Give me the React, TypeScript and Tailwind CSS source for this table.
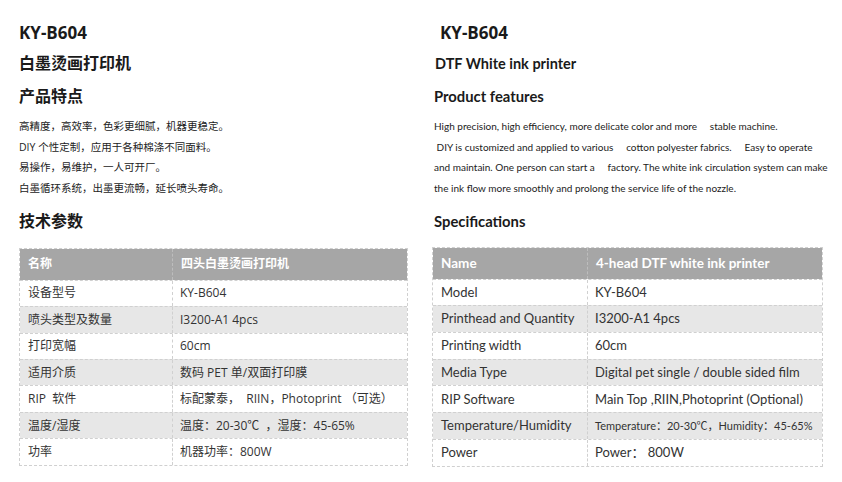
const cn = "font-['Open_Sans','Noto_Sans_CJK_SC',sans-serif]";
const en = "font-['Lato','Noto_Sans_CJK_SC',sans-serif]";

const cnRows: [string, string][] = [
  ['设备型号', 'KY-B604'],
  ['喷头类型及数量', 'I3200-A1 4pcs'],
  ['打印宽幅', '60cm'],
  ['适用介质', '数码 PET 单/双面打印膜'],
  ['RIP  软件', '标配蒙泰，  RIIN，Photoprint （可选）'],
  ['温度/湿度', '温度：20-30℃  ，湿度：45-65%'],
  ['功率', '机器功率：800W'],
];

const enRows: [string, string, boolean?][] = [
  ['Model', 'KY-B604'],
  ['Printhead and Quantity', 'I3200-A1 4pcs'],
  ['Printing width', '60cm'],
  ['Media Type', 'Digital pet single / double sided film'],
  ['RIP Software', 'Main Top ,RIIN,Photoprint (Optional)'],
  ['Temperature/Humidity', 'Temperature：20-30℃，Humidity：45-65%', true],
  ['Power', 'Power： 800W'],
];

function SpecTable({
  head,
  rows,
  firstCol,
  textSize,
  headSize,
  rowH,
  font,
}: {
  head: [string, string];
  rows: [string, string, boolean?][];
  firstCol: string;
  textSize: string;
  headSize: string;
  rowH: string;
  font: string;
}) {
  return (
    <div className={`border border-dashed border-[#d0d0d0] ${font}`}>
      <div className={`flex h-[31px] bg-[#a6a6a6] text-white font-bold ${headSize}`}>
        <div className={`${firstCol} flex items-center pl-2 border-r border-dashed border-[#bdbdbd]`}>{head[0]}</div>
        <div className="flex-1 flex items-center pl-2">{head[1]}</div>
      </div>
      {rows.map(([k, v, small], i) => (
        <div
          key={k}
          className={`flex ${rowH} text-[#333] border-t border-dashed border-[#d0d0d0] ${textSize} ${i % 2 === 1 ? 'bg-[#e7e7e7]' : 'bg-white'}`}
        >
          <div className={`${firstCol} flex items-center pl-2 border-r border-dashed border-[#d0d0d0] whitespace-pre`}>{k}</div>
          <div className={`flex-1 flex items-center pl-[7px] whitespace-pre ${small ? 'text-[11px]' : ''}`}>{v}</div>
        </div>
      ))}
    </div>
  );
}

export default function App() {
  return (
    <div className="w-[842px] h-[482px] bg-white flex text-[#1a1a1a]">
      {/* Chinese column */}
      <div className={`w-[413px] pl-[19px] pt-[23px] ${cn}`}>
        <div className="h-[20px] leading-[20px] text-[17px] font-bold">KY-B604</div>
        <div className="mt-[10px] h-[20px] leading-[20px] text-[16px] font-bold">白墨烫画打印机</div>
        <div className="mt-[13px] h-[20px] leading-[20px] text-[16px] font-bold">产品特点</div>
        <div className="mt-[10px] text-[10.5px] leading-[20.67px] text-[#222]">
          <div>高精度，高效率，色彩更细腻，机器更稳定。</div>
          <div>DIY 个性定制，应用于各种棉涤不同面料。</div>
          <div>易操作，易维护，一人可开厂。</div>
          <div>白墨循环系统，出墨更流畅，延长喷头寿命。</div>
        </div>
        <div className="mt-[12px] h-[20px] leading-[20px] text-[16px] font-bold">技术参数</div>
        <div className="mt-[17px] w-[389px]">
          <SpecTable
            head={['名称', '四头白墨烫画打印机']}
            rows={cnRows}
            firstCol="w-[153px]"
            textSize="text-[12px]"
            headSize="text-[12px]"
            rowH="h-[26.43px]"
            font={cn}
          />
        </div>
      </div>

      {/* English column */}
      <div className={`w-[429px] pl-[2px] pt-[23px] ${en}`}>
        <div className={`h-[20px] leading-[20px] text-[17px] font-bold pl-[25px] ${cn}`}>KY-B604</div>
        <div className="mt-[11px] h-[20px] leading-[20px] text-[14.5px] font-bold pl-[20px]">DTF White ink printer</div>
        <div className="mt-[12px] h-[20px] leading-[20px] text-[14.8px] font-bold pl-[19px]">Product features</div>
        <div className="mt-[10px] pl-[19px] text-[10px] leading-[20.67px] text-[#222] whitespace-pre">
          <div>High precision, high efficiency, more delicate color and more     stable machine.</div>
          <div> DIY is customized and applied to various     cotton polyester fabrics.     Easy to operate</div>
          <div>and maintain. One person can start a     factory. The white ink circulation system can make</div>
          <div>the ink flow more smoothly and prolong the service life of the nozzle.</div>
        </div>
        <div className="mt-[12px] h-[20px] leading-[20px] text-[14.8px] font-bold pl-[19px]">Specifications</div>
        <div className="mt-[16px] ml-[17px] w-[391px]">
          <SpecTable
            head={['Name', '4-head DTF white ink printer']}
            rows={enRows}
            firstCol="w-[155px]"
            textSize="text-[13px]"
            headSize="text-[13.5px]"
            rowH="h-[26.7px]"
            font={en}
          />
        </div>
      </div>
    </div>
  );
}
